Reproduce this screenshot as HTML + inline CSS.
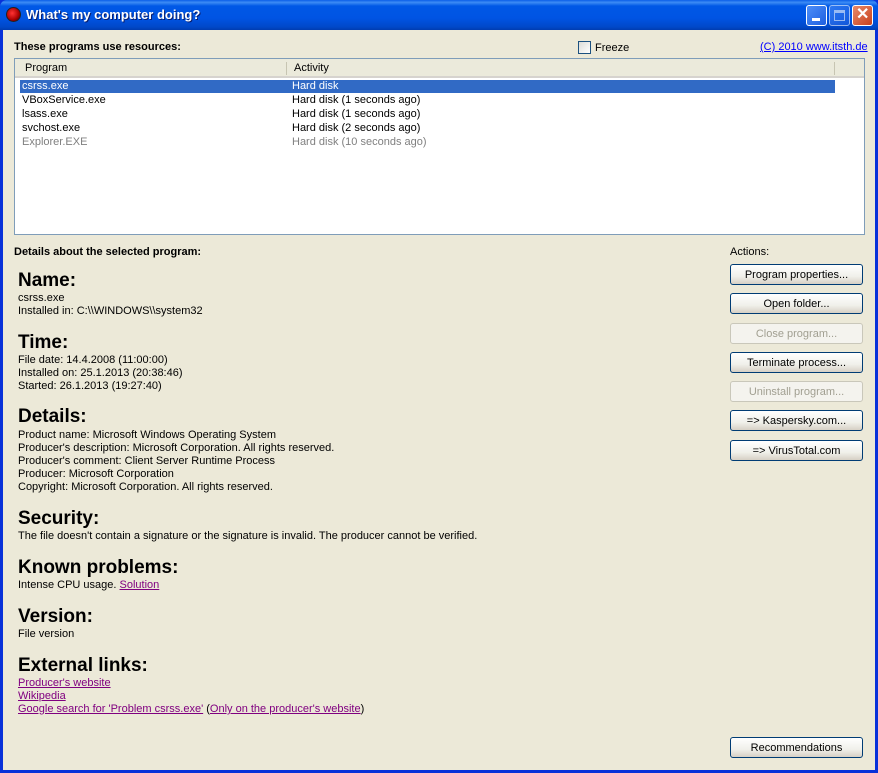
<!DOCTYPE html>
<html><head><style>
*{margin:0;padding:0;box-sizing:border-box}
body{width:878px;height:773px;overflow:hidden;font-family:"Liberation Sans",Tahoma,sans-serif;font-size:11px;color:#000;background:#0831d9;position:relative}
.a{position:absolute;white-space:nowrap;line-height:15px}
#title{left:0;top:0;width:878px;height:30px;background:linear-gradient(#0a5fe8 0%,#3d8cf5 8%,#0058e6 20%,#0054e3 60%,#0048c8 90%,#003cb0 100%);border-radius:7px 7px 0 0}
#client{left:3px;top:30px;width:872px;height:740px;background:#ece9d8}
.tb{top:5px;width:21px;height:21px;border:1px solid #fff;border-radius:3px;background:linear-gradient(135deg,#4d8ef8,#1e5fe0)}
.btn{position:absolute;left:730px;width:133px;height:21px;border:1px solid #003c74;border-radius:3px;background:linear-gradient(#fff,#f0f0ea 60%,#d6d0c5);text-align:center;line-height:20px;font-size:11px}
.dis{border-color:#c9c7ba;color:#a19f91;background:#f4f3ee}
h2{position:absolute;left:18px;font-size:19px;font-weight:bold;white-space:nowrap;line-height:22px}
.t{position:absolute;left:18px;line-height:13px;white-space:nowrap}
a{color:#800080;text-decoration:underline}
</style></head><body>
<div class="a" id="title"></div>
<div class="a" style="left:6px;top:7px;width:15px;height:15px;border-radius:50%;background:radial-gradient(circle at 40% 40%,#f33,#a00 60%,#300);border:1px solid #222"></div>
<div class="a" style="left:26px;top:7px;color:#fff;font-weight:bold;font-size:13px;text-shadow:1px 1px #0a1e6e">What's my computer doing?</div>
<div class="a tb" style="left:806px"><div class="a" style="left:5px;top:12px;width:8px;height:3px;background:#fff"></div></div>
<div class="a tb" style="left:829px;opacity:.6"><div class="a" style="left:4px;top:4px;width:11px;height:11px;border:1px solid #fff;border-top-width:3px"></div></div>
<div class="a tb" style="left:852px;background:linear-gradient(135deg,#e88a6a,#c8401c)"><div class="a" style="left:3px;top:0px;color:#fff;font-weight:bold;font-size:16px;line-height:18px">✕</div></div>
<div class="a" id="client"></div>
<div class="a" style="left:14px;top:40px;font-weight:bold">These programs use resources:</div>
<div class="a" style="left:578px;top:41px;width:13px;height:13px;border:1px solid #1c5180;background:linear-gradient(135deg,#dcdcd7,#fff)"></div>
<div class="a" style="left:595px;top:41px">Freeze</div>
<div class="a" style="left:760px;top:40px"><a style="color:#0000ff">(C) 2010 www.itsth.de</a></div>
<div class="a" style="left:14px;top:58px;width:851px;height:177px;border:1px solid #7f9db9;background:#fff"></div>
<div class="a" style="left:15px;top:59px;width:849px;height:19px;background:#ebeadb;border-bottom:2px solid #d6d3ce"></div>
<div class="a" style="left:286px;top:62px;width:1px;height:13px;background:#c7c5b2"></div>
<div class="a" style="left:834px;top:62px;width:1px;height:13px;background:#c7c5b2"></div>
<div class="a" style="left:25px;top:61px">Program</div>
<div class="a" style="left:294px;top:61px">Activity</div>
<div class="a" style="left:20px;top:80px;width:815px;height:13px;background:#316ac5"></div>
<div class="a" style="left:22px;top:79px;color:#fff">csrss.exe</div><div class="a" style="left:292px;top:79px;color:#fff">Hard disk</div>
<div class="a" style="left:22px;top:93px">VBoxService.exe</div><div class="a" style="left:292px;top:93px">Hard disk (1 seconds ago)</div>
<div class="a" style="left:22px;top:107px">lsass.exe</div><div class="a" style="left:292px;top:107px">Hard disk (1 seconds ago)</div>
<div class="a" style="left:22px;top:121px">svchost.exe</div><div class="a" style="left:292px;top:121px">Hard disk (2 seconds ago)</div>
<div class="a" style="left:22px;top:135px;color:#808080">Explorer.EXE</div><div class="a" style="left:292px;top:135px;color:#808080">Hard disk (10 seconds ago)</div>

<div class="a" style="left:14px;top:245px;font-weight:bold">Details about the selected program:</div>
<h2 style="top:270px">Name:</h2>
<div class="t" style="top:292px">csrss.exe<br>Installed in: C:\\WINDOWS\\system32</div>
<h2 style="top:332px">Time:</h2>
<div class="t" style="top:354px">File date: 14.4.2008 (11:00:00)<br>Installed on: 25.1.2013 (20:38:46)<br>Started: 26.1.2013 (19:27:40)</div>
<h2 style="top:406px">Details:</h2>
<div class="t" style="top:429px">Product name: Microsoft Windows Operating System<br>Producer's description: Microsoft Corporation. All rights reserved.<br>Producer's comment: Client Server Runtime Process<br>Producer: Microsoft Corporation<br>Copyright: Microsoft Corporation. All rights reserved.</div>
<h2 style="top:508px">Security:</h2>
<div class="t" style="top:530px">The file doesn't contain a signature or the signature is invalid. The producer cannot be verified.</div>
<h2 style="top:557px">Known problems:</h2>
<div class="t" style="top:579px">Intense CPU usage. <a>Solution</a></div>
<h2 style="top:606px">Version:</h2>
<div class="t" style="top:628px">File version</div>
<h2 style="top:655px">External links:</h2>
<div class="t" style="top:677px"><a>Producer's website</a><br><a>Wikipedia</a><br><a>Google search for 'Problem csrss.exe'</a> (<a>Only on the producer's website</a>)</div>

<div class="a" style="left:730px;top:245px">Actions:</div>
<div class="btn" style="top:264px">Program properties...</div>
<div class="btn" style="top:293px">Open folder...</div>
<div class="btn dis" style="top:323px">Close program...</div>
<div class="btn" style="top:352px">Terminate process...</div>
<div class="btn dis" style="top:381px">Uninstall program...</div>
<div class="btn" style="top:410px">=&gt; Kaspersky.com...</div>
<div class="btn" style="top:440px">=&gt; VirusTotal.com</div>
<div class="btn" style="top:737px">Recommendations</div>
</body></html>
